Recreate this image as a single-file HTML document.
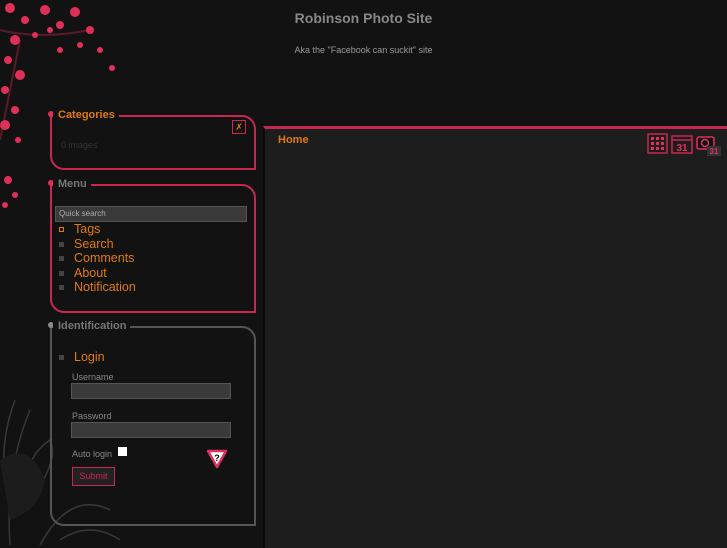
<!DOCTYPE html>
<html><head><style>
body{margin:0;width:727px;height:545px;background:#121212;font-family:"Liberation Sans",sans-serif;position:relative;overflow:hidden}
.abs{position:absolute}
.t{color:#888;font-weight:bold;font-size:14px;left:0;width:727px;text-align:center;top:10px}
.st{color:#999;font-size:9px;left:0;width:727px;text-align:center;top:45px}
.box{position:absolute;border:2px solid #c8284f;border-top-right-radius:14px;border-bottom-left-radius:14px;border-top:2px solid #c8284f}
.hd{position:absolute;font-weight:bold;font-size:11px;background:#121212;padding:0 4px 0 5px}
.dot{position:absolute;width:6px;height:6px;border-radius:3px;background:#e0305a}
.li{position:absolute;color:#e07a10;font-size:12.5px;left:74px}
.sq{position:absolute;left:59px;width:5px;height:5px;background:#444}
.lbl{position:absolute;color:#888;font-size:9px;left:72px}
.inp{position:absolute;left:71px;width:158px;height:14px;background:#3a3a3a;border:1px solid #555}
</style></head><body>
<div class="abs t">Robinson Photo Site</div>
<div class="abs st">Aka the "Facebook can suckit" site</div>

<svg class="abs" style="left:0;top:0" width="130" height="220">
<g stroke="#5a1a28" stroke-width="2" fill="none"><path d="M0 30 Q40 40 90 30 M20 40 Q10 90 0 140"/></g>
<g fill="#e0305a">
<circle cx="10" cy="8" r="5"/><circle cx="25" cy="20" r="4"/><circle cx="45" cy="10" r="5"/><circle cx="60" cy="25" r="4"/><circle cx="75" cy="12" r="5"/><circle cx="90" cy="30" r="4"/><circle cx="100" cy="50" r="3"/><circle cx="112" cy="68" r="3"/><circle cx="80" cy="45" r="3"/><circle cx="60" cy="50" r="3"/>
<circle cx="15" cy="40" r="5"/><circle cx="8" cy="60" r="4"/><circle cx="20" cy="75" r="5"/><circle cx="5" cy="90" r="4"/><circle cx="15" cy="110" r="4"/><circle cx="5" cy="125" r="5"/><circle cx="18" cy="140" r="3"/>
<circle cx="8" cy="180" r="4"/><circle cx="15" cy="195" r="3"/><circle cx="5" cy="205" r="3"/>
<circle cx="35" cy="35" r="3"/><circle cx="50" cy="30" r="3"/>
</g>
</svg>
<svg class="abs" style="left:0;top:380" width="130" height="165" opacity="0.45">
<g fill="none" stroke="#666" stroke-width="1.5">
<path d="M10 165 Q5 90 30 30 M30 120 Q60 80 50 60 Q20 80 30 120 M5 100 Q0 60 15 20 M40 165 Q70 110 110 130 M60 160 Q90 140 120 160"/>
</g>
<path d="M0 80 Q30 60 45 100 Q40 130 10 140 Z" fill="#2a2a2a"/>
</svg>

<div class="box" style="left:50px;top:115px;width:202px;height:51px"></div>
<div class="dot" style="left:48px;top:111px"></div>
<div class="hd" style="left:53px;top:109px;color:#e07a10">Categories</div>
<div class="abs" style="left:232px;top:120px;width:12px;height:12px;border:1px solid #c8284f;color:#e07a10;font-size:9px;line-height:12px;text-align:center">✗</div>
<div class="abs" style="left:61px;top:140px;color:#333;font-size:9px">0 images</div>

<div class="box" style="left:50px;top:184px;width:202px;height:125px"></div>
<div class="dot" style="left:48px;top:180px"></div>
<div class="hd" style="left:53px;top:178px;color:#777">Menu</div>
<div class="abs" style="left:55px;top:206px;background:#3a3a3a;border:1px solid #555;color:#aaa;font-size:8px;line-height:14px;padding-left:3px;box-sizing:border-box;width:192px;height:16px">Quick search</div>
<div class="sq" style="top:227px;background:none;border:1px solid #e07a10;width:3px;height:3px"></div><div class="li" style="top:222px">Tags</div>
<div class="sq" style="top:242px"></div><div class="li" style="top:237px">Search</div>
<div class="sq" style="top:256px"></div><div class="li" style="top:251px">Comments</div>
<div class="sq" style="top:271px"></div><div class="li" style="top:266px">About</div>
<div class="sq" style="top:285px"></div><div class="li" style="top:280px">Notification</div>

<div class="box" style="left:50px;top:326px;width:202px;height:196px;border-color:#555"></div>
<div class="dot" style="left:48px;top:322px;background:#888"></div>
<div class="hd" style="left:53px;top:320px;color:#777">Identification</div>
<div class="sq" style="top:355px"></div><div class="li" style="top:350px">Login</div>
<div class="lbl" style="top:372px">Username</div>
<div class="inp" style="top:383px"></div>
<div class="lbl" style="top:411px">Password</div>
<div class="inp" style="top:422px"></div>
<div class="lbl" style="top:449px">Auto login</div>
<div class="abs" style="left:118px;top:447px;width:9px;height:9px;background:#fff"></div>
<svg class="abs" style="left:206px;top:449px" width="22" height="20"><path d="M2 2 H20 L11 18 Z" fill="#fff" stroke="#e0305a" stroke-width="2.5" stroke-linejoin="round"/><text x="11" y="12" font-size="9" font-weight="bold" text-anchor="middle" font-family="Liberation Sans">?</text></svg>
<div class="abs" style="left:72px;top:467px;width:41px;height:17px;border:1px solid #c8284f;background:#222;color:#c8284f;font-size:9px;line-height:17px;text-align:center">Submit</div>

<div class="abs" style="left:263px;top:126px;width:464px;height:419px;background:#1d1d1d;border-top:3px solid #c8284f;border-left:2px solid #0a0a0a"></div>
<div class="abs" style="left:278px;top:134px;color:#e07a10;font-weight:bold;font-size:11px">Home</div>
<svg class="abs" style="left:647px;top:132px" width="80" height="26">
<g stroke="#c8284f" fill="none" stroke-width="1.5">
<rect x="1" y="2" width="19" height="19"/>
<rect x="25" y="4" width="20" height="17"/><line x1="25" y1="8" x2="45" y2="8"/>
</g>
<g fill="#e0305a"><rect x="4" y="5" width="3" height="3"/><rect x="9" y="5" width="3" height="3"/><rect x="14" y="5" width="3" height="3"/><rect x="4" y="10" width="3" height="3"/><rect x="9" y="10" width="3" height="3"/><rect x="14" y="10" width="3" height="3"/><rect x="4" y="15" width="3" height="3"/><rect x="9" y="15" width="3" height="3"/><rect x="14" y="15" width="3" height="3"/></g>
<text x="35" y="19" fill="#e0305a" font-size="10" font-weight="bold" text-anchor="middle" font-family="Liberation Sans">31</text>
<rect x="50" y="5" width="17" height="12" rx="2" fill="#111" stroke="#e0305a" stroke-width="1.5"/><circle cx="58" cy="11" r="3.5" fill="none" stroke="#e0305a" stroke-width="1.5"/>
<rect x="60" y="14" width="14" height="10" fill="#333"/><text x="67" y="22" fill="#e0305a" font-size="8" font-weight="bold" text-anchor="middle" font-family="Liberation Sans">31</text>
</svg>
</body></html>
